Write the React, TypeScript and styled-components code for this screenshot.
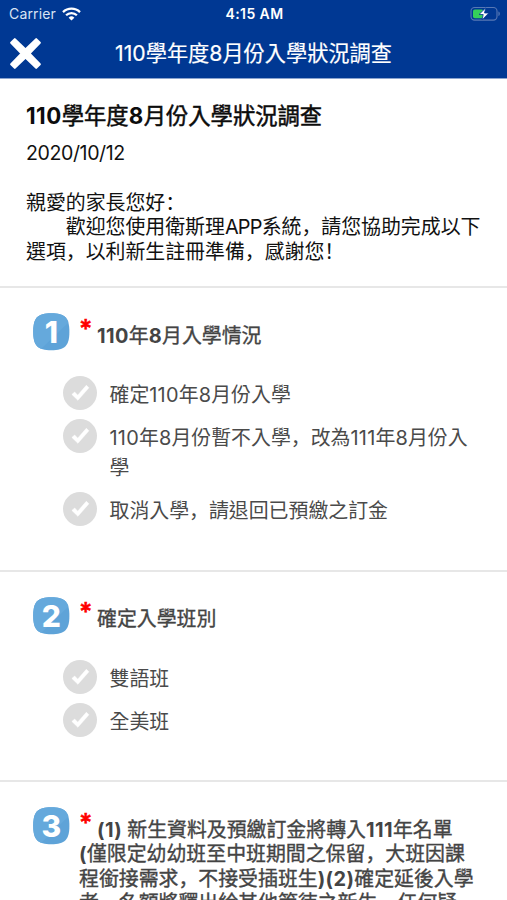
import React from "react";
import styled, { createGlobalStyle } from "styled-components";

const GlobalStyle = createGlobalStyle`
  * { box-sizing: border-box; }
  html, body { margin: 0; padding: 0; background: #fff; }
  body {
    height: 900px;
    overflow: hidden;
    font-family: Inter, "Noto Sans CJK TC", sans-serif;
  }
`;

const Screen = styled.main`
  width: 507px;
  height: 900px;
  overflow: hidden;
  background: #fff;
  color: #111;
`;

const Header = styled.header`
  height: 79px;
  background: #003893;
  border-bottom: 1px solid #8ba4cf;
  color: #fff;
`;

const StatusBar = styled.div`
  display: grid;
  grid-template-columns: 1fr auto 1fr;
  align-items: center;
  height: 27px;
  padding: 0 6px 0 9px;
  font-size: 14px;
`;

const Carrier = styled.span`
  display: flex;
  align-items: center;
  gap: 6px;
  color: #d9e3f4;
  letter-spacing: 0.15px;
`;

const Clock = styled.span`
  margin-right: 1px;
  font-size: 14px;
  font-weight: 600;
  letter-spacing: 0.4px;
`;

const BatterySlot = styled.span`
  justify-self: end;
  display: flex;
`;

const NavBar = styled.div`
  display: grid;
  grid-template-columns: 50px 1fr 50px;
  align-items: center;
  height: 51px;
`;

const CloseButton = styled.button`
  display: flex;
  width: 50px;
  padding: 2px 0 0 9px;
  border: 0;
  background: none;
`;

const NavTitle = styled.h1`
  margin: 0;
  font-size: 21.2px;
  font-weight: 400;
  line-height: 30px;
  text-align: center;
  white-space: nowrap;
  -webkit-text-stroke: 0.2px currentColor;
`;

const Intro = styled.section`
  height: 207px;
  padding: 21px 20px 0 26px;
`;

const IntroTitle = styled.h2`
  margin: 0;
  font-size: 22.3px;
  font-weight: 400;
  line-height: 32px;
  color: #0c0c0c;
  white-space: nowrap;
  -webkit-text-stroke: 0.5px currentColor;
`;

const IntroDate = styled.div`
  margin-top: 8px;
  font-size: 19.6px;
  line-height: 26px;
  letter-spacing: -0.42px;
`;

const IntroText = styled.p`
  margin: 24.5px 0 0;
  font-size: 19.9px;
  line-height: 24.5px;
  white-space: pre;
`;

const Question = styled.section`
  display: grid;
  grid-template-columns: 46px 1fr;
  border-top: 2px solid #e7e7e7;
  padding: 25px 0 34.5px 33px;
`;

const QuestionTitle = styled.h3`
  margin: 10.5px 0 0;
  font-size: 19.9px;
  font-weight: 400;
  line-height: 24.5px;
  color: #444;
  white-space: pre;
  -webkit-text-stroke: 0.35px currentColor;
`;

const Required = styled.span`
  display: inline-block;
  width: 18px;
  font-size: 25px;
  font-weight: 600;
  line-height: 0;
  vertical-align: 5px;
  color: #f00;
  -webkit-text-stroke: 0.5px currentColor;
`;

const Options = styled.ul`
  grid-column: 1 / -1;
  margin: 0;
  padding: 0 0 0 30px;
  list-style: none;
`;

const Option = styled.li`
  display: flex;
  gap: 12.5px;
  padding-bottom: 9px;
`;

const OptionText = styled.span`
  padding-top: 4px;
  font-size: 19.9px;
  line-height: 30px;
  color: #4a4a4a;
  white-space: pre;
`;

const BadgeCell = styled.div`
  height: 63px;
`;

const Latin = styled.span<{ $track: number; $weight?: number }>`
  letter-spacing: ${(p) => p.$track}px;
  ${(p) => p.$weight && `font-weight: ${p.$weight}; -webkit-text-stroke: 0;`}
`;

const Punct = styled.span`
  font-family: "Noto Sans CJK SC", sans-serif;
  line-height: 0;
`;

type RichProps = { text: string; track?: number; weight?: number };

function Rich({ text, track = 0, weight }: RichProps) {
  return (
    <>
      {text.split(/([，：！]|[A-Za-z0-9()/]+ ?)/).map((part, i) => {
        if (/^[，：！]$/.test(part)) return <Punct key={i} lang="zh-Hans">{part}</Punct>;
        if (/^[A-Za-z0-9()/]+ ?$/.test(part))
          return <Latin key={i} $track={track} $weight={weight}>{part}</Latin>;
        return part;
      })}
    </>
  );
}

function WifiIcon() {
  return (
    <svg width="19" height="14" viewBox="0 0 19 14" fill="none" stroke="#fff" strokeWidth="2.3">
      <path d="M1 5.1a12.2 12.2 0 0 1 17 0" />
      <path d="M4.1 8.3a7.7 7.7 0 0 1 10.8 0" />
      <path d="M9.5 13.6 6.6 10.7a4.1 4.1 0 0 1 5.8 0z" fill="#fff" stroke="none" />
    </svg>
  );
}

function BatteryIcon() {
  return (
    <svg width="31" height="16" viewBox="0 0 31 16">
      <rect x="1" y="1.5" width="26" height="12.6" rx="3.6" fill="none" stroke="#5878b5" strokeWidth="1.1" />
      <path d="M28.5 5.6c1.6.5 1.6 4 0 4.5z" fill="#6484bd" />
      <rect x="3" y="3.4" width="10.5" height="8.8" rx="1.8" fill="#35cf5b" />
      <path d="M15.8 1.8 9 8.5h4.2l-1.1 5.4L18.8 7h-4.3z" fill="#fff" stroke="#003893" strokeWidth=".8" />
    </svg>
  );
}

function CloseIcon() {
  return (
    <svg width="33" height="33" viewBox="0 0 33 33">
      <path
        d="M5.8 2.2 16.5 12.5 27.2 2.2 30.8 5.8 20.4 16.5 30.8 27.2 27.2 30.8 16.5 20.4 5.8 30.8 2.2 27.2 12.6 16.5 2.2 5.8z"
        fill="#fff"
        stroke="#fff"
        strokeWidth="2.2"
        strokeLinejoin="round"
      />
    </svg>
  );
}

function NumberBadge({ value }: { value: number }) {
  const id = `badge-${value}`;
  return (
    <svg width="37" height="38" viewBox="0 0 37 38">
      <clipPath id={id}>
        <path d="M18.3.3C32 .3 36.4 5 36.4 18.8S32 37.3 18.3 37.3.2 32.6.2 18.8 4.6.3 18.3.3z" />
      </clipPath>
      <g clipPath={`url(#${id})`}>
        <rect width="37" height="38" fill="#5ea3d8" />
        <path d="M0 0H37V8L6 38H0z" fill="#65a9dc" />
      </g>
      <text
        x="18.3"
        y="29.7"
        textAnchor="middle"
        fontFamily="Inter, sans-serif"
        fontSize="30"
        fontWeight="800"
        fill="#fff"
      >
        {value}
      </text>
    </svg>
  );
}

function CheckCircle() {
  return (
    <svg width="34" height="34" viewBox="0 0 34 34">
      <circle cx="17" cy="17" r="17" fill="#dcdcdc" />
      <path
        d="M8.9 18.4 11.7 16 14.7 19.2 23.3 9.3 25.9 11.8 14.9 24.3z"
        fill="#fff"
        stroke="#fff"
        strokeWidth=".5"
        strokeLinejoin="round"
      />
    </svg>
  );
}

const questions = [
  {
    title: "110年8月入學情況",
    options: ["確定110年8月份入學", "110年8月份暫不入學，改為111年8月份入\n學", "取消入學，請退回已預繳之訂金"],
  },
  { title: "確定入學班別", options: ["雙語班", "全美班"] },
  {
    title:
      "(1) 新生資料及預繳訂金將轉入111年名單\n(僅限定幼幼班至中班期間之保留，大班因課\n程銜接需求，不接受插班生)(2)確定延後入學\n者，名額將釋出給其他等待之新生，任何疑",
    options: [],
  },
];

export default function App() {
  return (
    <>
      <GlobalStyle />
      <Screen lang="zh-Hant">
        <Header>
          <StatusBar>
            <Carrier>Carrier <WifiIcon /></Carrier>
            <Clock>4:15 AM</Clock>
            <BatterySlot><BatteryIcon /></BatterySlot>
          </StatusBar>
          <NavBar>
            <CloseButton aria-label="關閉"><CloseIcon /></CloseButton>
            <NavTitle><Rich text="110學年度8月份入學狀況調查" /></NavTitle>
          </NavBar>
        </Header>
        <Intro>
          <IntroTitle><Rich weight={700} track={0.5} text="110學年度8月份入學狀況調查" /></IntroTitle>
          <IntroDate>2020/10/12</IntroDate>
          <IntroText>
            <Rich track={-0.8} text={"親愛的家長您好：\n\u3000\u3000歡迎您使用衛斯理APP系統，請您協助完成以下\n選項，以利新生註冊準備，感謝您！"} />
          </IntroText>
        </Intro>
        {questions.map((q, i) => (
          <Question key={i}>
            <BadgeCell><NumberBadge value={i + 1} /></BadgeCell>
            <QuestionTitle><Required>*</Required><Rich weight={650} track={0.4} text={q.title} /></QuestionTitle>
            <Options>
              {q.options.map((o) => (
                <Option key={o}>
                  <CheckCircle />
                  <OptionText><Rich track={0.25} text={o} /></OptionText>
                </Option>
              ))}
            </Options>
          </Question>
        ))}
      </Screen>
    </>
  );
}
